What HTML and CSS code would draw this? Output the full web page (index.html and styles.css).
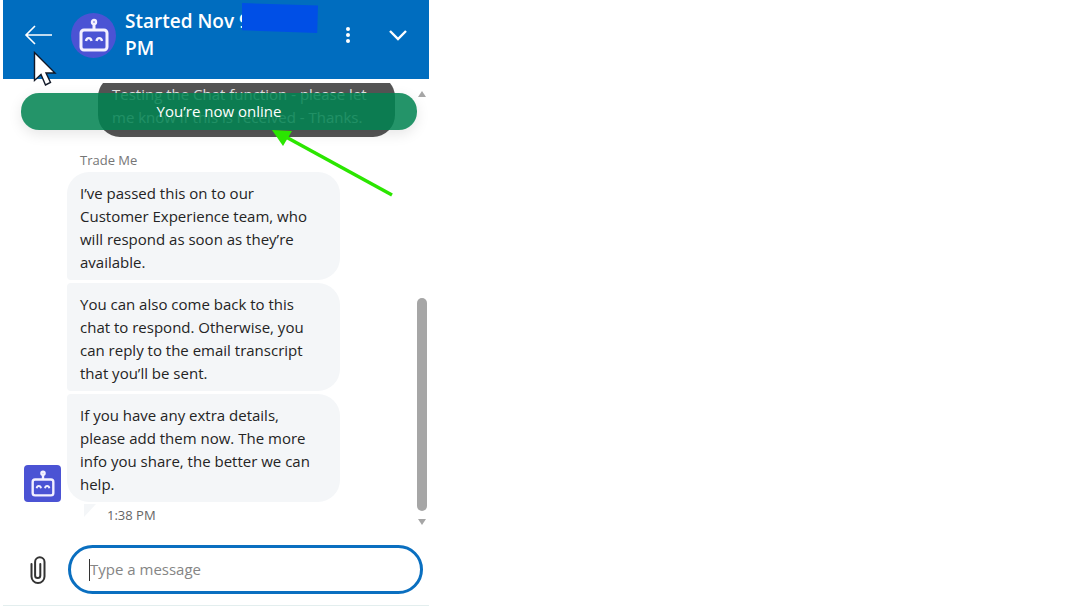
FILE: index.html
```html
<!DOCTYPE html>
<html lang="en">
<head>
    <meta charset="UTF-8">
    <meta name="viewport" content="width=device-width, initial-scale=1.0">
    <title>Chat</title>
    <link rel="stylesheet" href="styles.css">
</head>
<body>
    <main class="chat">
        <header class="chat-header">
            <button class="icon-btn back-btn" type="button" aria-label="Back">
                <svg width="28" height="20" viewBox="0 0 28 20" fill="none" stroke="#fff" stroke-width="1.6">
                    <path d="M28 10H2M11 1L2 10l9 9"/>
                </svg>
            </button>
            <span class="avatar avatar-round">
                <svg width="30" height="34" viewBox="0 0 30 34" fill="none" stroke="#f3f0ff" stroke-width="3">
                    <circle cx="15" cy="4" r="2" stroke-width="2.4"/>
                    <path d="M15 6v6" stroke-width="3"/>
                    <rect x="2" y="12" width="26" height="20" rx="3"/>
                    <path d="M7 23c.6-3.800 4.900-3.800 5.500 0M17.500 23c.6-3.800 4.900-3.800 5.500 0" stroke-width="2.4"/>
                </svg>
            </span>
            <h1 class="chat-title">Started Nov <span class="date">9<span class="redaction"></span></span><br>PM</h1>
            <button class="icon-btn menu-btn" type="button" aria-label="More options">
                <svg width="6" height="18" viewBox="0 0 6 18" fill="#fff">
                    <circle cx="3" cy="3" r="2"/>
                    <circle cx="3" cy="9" r="2"/>
                    <circle cx="3" cy="15" r="2"/>
                </svg>
            </button>
            <button class="icon-btn" type="button" aria-label="Minimise">
                <svg width="18" height="12" viewBox="0 0 18 12" fill="none" stroke="#fff" stroke-width="2.4">
                    <path d="M1 2l8 8 8-8"/>
                </svg>
            </button>
        </header>

        <!-- Conversation -->
        <section class="messages">
            <p class="bubble bubble-user">Testing the Chat function - please let me know if this is received - Thanks.</p>
            <div class="status" role="status">You’re now online</div>

            <p class="sender">Trade Me</p>
            <div class="agent">
                <span class="avatar avatar-square">
                    <svg width="24" height="27" viewBox="0 0 30 34" fill="none" stroke="#f3f0ff" stroke-width="3">
                        <circle cx="15" cy="4" r="2" stroke-width="3"/>
                        <path d="M15 6v6" stroke-width="3"/>
                        <rect x="2" y="12" width="26" height="20" rx="3"/>
                        <path d="M7 23c.6-3.800 4.900-3.800 5.500 0M17.500 23c.6-3.800 4.900-3.800 5.500 0" stroke-width="2.4"/>
                    </svg>
                </span>
                <div class="bubbles">
                    <p class="bubble">I’ve passed this on to our Customer Experience team, who will respond as soon as they’re available.</p>
                    <p class="bubble">You can also come back to this chat to respond. Otherwise, you can reply to the email transcript that you’ll be sent.</p>
                    <p class="bubble">If you have any extra details, please add them now. The more info you share, the better we can help.</p>
                </div>
            </div>
            <div class="meta">
                <span class="tail"></span>
                <time>1:38 PM</time>
            </div>

            <div class="scrollbar">
                <span class="arrow-up"></span>
                <span class="thumb"></span>
                <span class="arrow-down"></span>
            </div>
        </section>

        <!-- Message box -->
        <form class="composer">
            <button class="icon-btn attach-btn" type="button" aria-label="Attach a file">
                <svg width="16" height="28" viewBox="0 0 16 28" fill="none" stroke="#333" stroke-width="2" stroke-linecap="round">
                    <path d="M1.500 8v12.500a6.500 6.500 0 0 0 13 0V6a4.700 4.700 0 0 0-9.400 0v13.500a2.600 2.600 0 0 0 5.200 0V8"/>
                </svg>
            </button>
            <label class="message-box">
                <span class="caret"></span>
                <input class="message-input" type="text" placeholder="Type a message" aria-label="Type a message">
            </label>
        </form>

        <svg class="pointer" width="24" height="36" viewBox="0 0 24 36" fill="#fff" stroke="#111827" stroke-width="1.4">
            <path d="M1.500 1.500v28l6.500-6 4.500 10.500 5-2.500-4.500-9.500h9z"/>
        </svg>
        <svg class="callout" width="124" height="70" viewBox="0 0 124 70">
            <path d="M14 8l106 58" stroke="#2be600" stroke-width="3.5" fill="none"/>
            <path d="M0 1l20 1-9 15z" fill="#2be600"/>
        </svg>
    </main>
</body>
</html>
```
FILE: styles.css
```css
* {
    box-sizing: border-box;
}
body {
    margin: 0;
    background-color: #fff;
    color: #242424;
    font-family: "Open Sans", "Noto Sans", sans-serif;
    font-size: 15px;
    line-height: 23px;
}
h1, p {
    margin: 0;
}
.chat {
    position: relative;
    width: 100%;
    max-width: 426px;
    margin-left: 3px;
    border-bottom: 1px solid #e3eeee;
}
.icon-btn {
    display: flex;
    padding: 0;
    border: none;
    background: none;
    cursor: pointer;
}

/* Header */
.chat-header {
    display: flex;
    align-items: center;
    padding: 8px 22px 17px 21px;
    background-color: #006dbf;
    color: #fff;
}
.avatar {
    display: flex;
    flex-shrink: 0;
    align-items: center;
    justify-content: center;
    background-color: #4b53d4;
}
.avatar-round {
    width: 45px;
    height: 45px;
    margin: 0 9px 0 19px;
    border-radius: 50%;
}
.chat-title {
    flex: 1;
    font-size: 19px;
    font-weight: 600;
    line-height: 27px;
}
.date {
    position: relative;
}
.redaction {
    position: absolute;
    top: -5px;
    left: 3px;
    width: 76px;
    height: 30px;
    background-color: #004fe6;
    clip-path: polygon(0 0, 100% 8%, 99% 100%, 0 91%);
}
.menu-btn {
    margin-right: 38px;
}

/* Conversation */
.messages {
    position: relative;
    margin-top: 4px;
    padding-bottom: 18px;
    overflow: hidden;
}
.bubble {
    padding: 10px 22px 6px 13px;
    border-radius: 4px 22px 22px 4px;
    background-color: #f4f6f8;
}
.bubble:first-child {
    border-top-left-radius: 22px;
}
.bubble:last-child {
    border-bottom-left-radius: 22px;
}
.bubble-user {
    margin: -8px 34px 0 95px;
    padding: 8px 14px;
    border-radius: 22px;
    background-color: #555;
    color: #e4e4e4;
}
.status {
    position: absolute;
    top: 10px;
    left: 18px;
    right: 12px;
    padding: 7px;
    border-radius: 18px;
    background-color: rgba(0, 130, 80, 0.86);
    box-shadow: 0 4px 14px rgba(0, 0, 0, 0.1);
    color: #fff;
    text-align: center;
}
.sender {
    padding: 12px 77px 0;
    color: #767676;
    font-size: 13px;
}
.agent {
    display: flex;
    align-items: flex-end;
    gap: 6px;
    padding: 0 89px 0 21px;
}
.avatar-square {
    width: 37px;
    height: 37px;
    border-radius: 4px;
}
.bubbles {
    display: flex;
    flex: 1;
    flex-direction: column;
    gap: 3px;
}
.meta {
    display: flex;
    gap: 11px;
    padding: 2px 0 0 81px;
    color: #666;
    font-size: 13px;
}
.tail {
    width: 12px;
    height: 13px;
    background-color: #f4f6f8;
    clip-path: polygon(0 0, 100% 0, 0 100%);
}
.scrollbar {
    position: absolute;
    top: 8px;
    right: 2px;
    bottom: 20px;
    display: flex;
    width: 10px;
    flex-direction: column;
    align-items: center;
    justify-content: space-between;
}
.arrow-up, .arrow-down {
    width: 8px;
    height: 6px;
    background-color: #a6a6a6;
    clip-path: polygon(50% 0, 100% 100%, 0 100%);
}
.arrow-down {
    transform: rotate(180deg);
}
.thumb {
    width: 10px;
    height: 49%;
    margin-top: auto;
    margin-bottom: 8px;
    border-radius: 5px;
    background-color: #a6a6a6;
}

/* Message box */
.composer {
    display: flex;
    align-items: center;
    gap: 22px;
    padding: 0 6px 11px 27px;
}
.message-box {
    display: flex;
    flex: 1;
    align-items: center;
    height: 49px;
    padding: 0 18px;
    border: 3px solid #0a6fc0;
    border-radius: 25px;
}
.caret {
    width: 1px;
    height: 22px;
    background-color: #333;
}
.message-input {
    flex: 1;
    min-width: 0;
    padding: 0;
    border: none;
    outline: none;
    background: none;
    color: #242424;
    font: inherit;
}
.message-input::placeholder {
    color: #858585;
    opacity: 1;
}

/* Pointer and arrow over the chat */
.pointer {
    position: absolute;
    top: 51px;
    left: 30px;
}
.callout {
    position: absolute;
    top: 129px;
    left: 269px;
}
```
